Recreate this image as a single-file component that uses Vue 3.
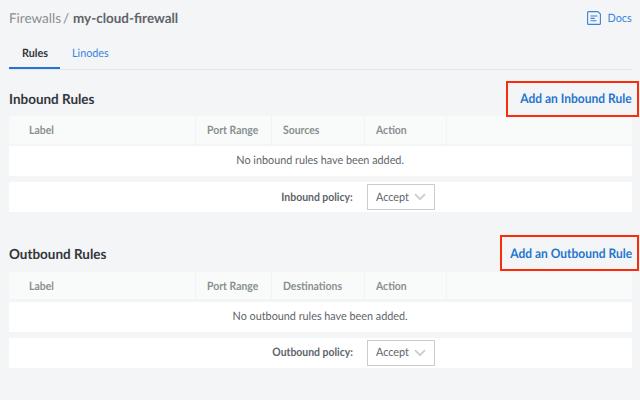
<script setup>
const sections = [
  { id: 'inbound', title: 'Inbound Rules', action: 'Add an Inbound Rule', peers: 'Sources', empty: 'No inbound rules have been added.', policy: 'Inbound policy:' },
  { id: 'outbound', title: 'Outbound Rules', action: 'Add an Outbound Rule', peers: 'Destinations', empty: 'No outbound rules have been added.', policy: 'Outbound policy:' }
]
</script>

<template>
  <main class="page">
    <header class="top">
      <div class="crumbs"><span class="parent">Firewalls</span><span class="slash">/</span><h1>my-cloud-firewall</h1></div>
      <a class="docs">
        <svg width="14" height="14" viewBox="0 0 14 14" fill="none" stroke="#3683dc">
          <path d="M1.6.6h9.2l2.6 2.5v9.3a1 1 0 0 1-1 1H1.6a1 1 0 0 1-1-1V1.6a1 1 0 0 1 1-1z" stroke-width="1.1" />
          <path d="M3.5 5h7M3.5 7.4h4.2M3.5 9.8h6" stroke-width="1.1" />
        </svg>
        <span class="narrow end">Docs</span>
      </a>
    </header>
    <nav class="tabs">
      <a class="tab active"><span class="narrow">Rules</span></a>
      <a class="tab"><span class="narrow">Linodes</span></a>
    </nav>
    <section v-for="s in sections" :key="s.id" class="rules" :class="s.id">
      <div class="heading">
        <h2>{{ s.title }}</h2>
        <a class="add"><span class="narrow end">{{ s.action }}</span></a>
      </div>
      <div class="columns">
        <div class="label"><span class="narrow">Label</span></div>
        <div><span class="narrow">Port Range</span></div>
        <div><span class="narrow">{{ s.peers }}</span></div>
        <div><span class="narrow">Action</span></div>
        <div></div>
      </div>
      <div class="empty"><span class="narrow middle">{{ s.empty }}</span></div>
      <div class="policy">
        <strong><span class="narrow end">{{ s.policy }}</span></strong>
        <div class="select">
          <span class="narrow">Accept</span>
          <svg width="12" height="8" viewBox="0 0 12 8" fill="none" stroke="#cdcecf" stroke-width="1.9"><path d="M1 1.2l5 5 5-5" /></svg>
        </div>
      </div>
    </section>
  </main>
</template>

<style>
body { margin: 0; background: #f4f5f6; }
</style>

<style scoped>
.page {
  box-sizing: border-box;
  width: 640px;
  height: 400px;
  padding-left: 9px;
  overflow: hidden;
  background: #f4f5f6;
  color: #606469;
  font-family: Lato, sans-serif;
  font-size: 11.5px;
  text-rendering: geometricPrecision;
}
.narrow { display: inline-block; transform: scaleX(.94); transform-origin: left center; }
.narrow.middle { transform-origin: center; }
.narrow.end { transform-origin: right center; }
h1, h2 { margin: 0; }
.top { display: flex; justify-content: space-between; align-items: center; height: 36px; padding-right: 8px; }
.crumbs { display: flex; align-items: baseline; font-size: 13.5px; line-height: 18px; }
.parent { color: #888f91; }
.slash { margin: 0 3.5px 0 2px; color: #888f91; }
h1 { font-size: 13.8px; font-weight: 700; line-height: 18px; transform: scaleX(.975); transform-origin: left center; }
.docs { display: flex; align-items: center; gap: 5px; color: #3683dc; }
.tabs { display: flex; box-sizing: border-box; height: 34px; width: 623px; border-bottom: 1px solid #e5e7e9; }
.tab { box-sizing: border-box; height: 33px; padding: 0 12px; color: #3683dc; line-height: 35px; }
.tab.active { width: 51px; padding-left: 12.7px; border-bottom: 2px solid #1f75d3; color: #32363c; font-weight: 700; }
.rules { height: 155.5px; }
.rules.inbound { padding-top: 10.5px; }
.heading { display: flex; justify-content: space-between; height: 35.5px; }
h2 { color: #32363c; font-size: 13.9px; font-weight: 700; line-height: 35px; transform: scaleX(.97); transform-origin: left center; }
.add {
  display: flex;
  justify-content: flex-end;
  box-sizing: border-box;
  width: 133px;
  height: 36px;
  margin-right: 1px;
  padding-right: 5px;
  border: 2px solid #fb2b0c;
  color: #2575d0;
  font-size: 13px;
  font-weight: 700;
  line-height: 31px;
  white-space: nowrap;
}
.add .narrow { transform: scaleX(.923); }
.outbound .add { width: 139px; margin-top: -1px; line-height: 33px; }
.columns {
  display: grid;
  grid-template-columns: 187px 76px 93px 82px 185px;
  width: 623px;
  height: 27.5px;
  background: #f9fbfa;
  color: #888f91;
  font-weight: 700;
  line-height: 29px;
}
.columns > div { padding-left: 11px; border-right: 1px solid #f2f3f4; }
.columns > .label { padding-left: 20px; }
.columns > div:last-child { border: 0; }
.columns .narrow, .policy strong .narrow { transform: scaleX(.907); }
.empty { width: 623px; height: 30px; margin-top: 2.5px; background: #fff; line-height: 30px; text-align: center; }
.policy { display: flex; align-items: center; width: 623px; height: 30px; margin-top: 6px; background: #fff; }
.policy strong { width: 344px; font-weight: 700; text-align: right; }
.select {
  display: flex;
  align-items: center;
  justify-content: space-between;
  box-sizing: border-box;
  width: 68px;
  height: 26px;
  margin-left: 14px;
  padding: 0 8px;
  border: 1px solid #ccc;
}
</style>
